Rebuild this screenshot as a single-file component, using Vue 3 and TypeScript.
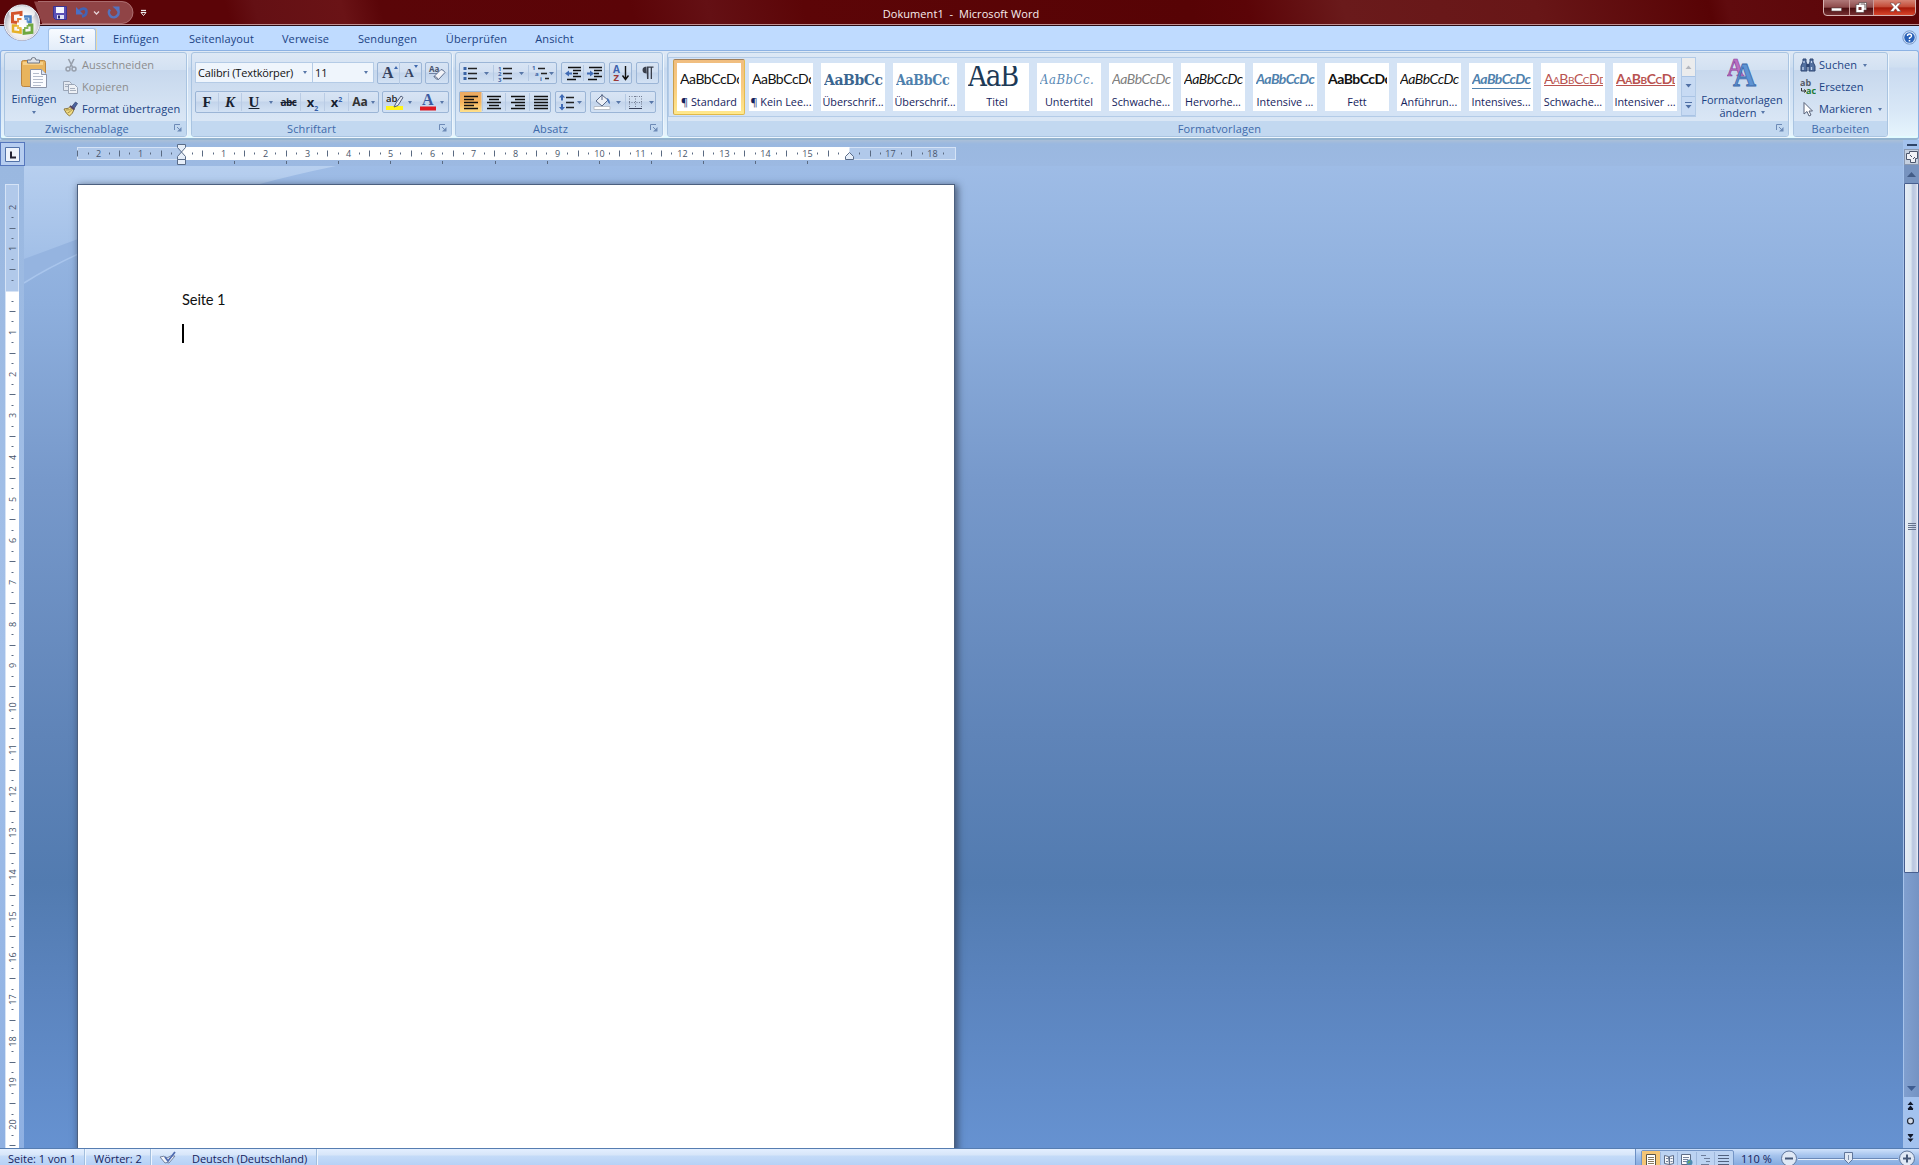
<script setup lang="ts">
interface StyleItem {
  name: string
  kind: string
  text: string
}
interface Mark {
  pos: number
  label: string
  type: 'num' | 'half' | 'dot'
}

const tabs = [
  { label: 'Start', width: 48, active: true },
  { label: 'Einfügen', width: 80 },
  { label: 'Seitenlayout', width: 91 },
  { label: 'Verweise', width: 77 },
  { label: 'Sendungen', width: 87 },
  { label: 'Überprüfen', width: 91 },
  { label: 'Ansicht', width: 65 },
]

const styles: StyleItem[] = [
  { name: '¶ Standard', kind: 'normal', text: 'AaBbCcDc' },
  { name: '¶ Kein Lee...', kind: 'normal', text: 'AaBbCcDc' },
  { name: 'Überschrif...', kind: 'h1', text: 'AaBbCc' },
  { name: 'Überschrif...', kind: 'h2', text: 'AaBbCc' },
  { name: 'Titel', kind: 'title', text: 'AaB' },
  { name: 'Untertitel', kind: 'subtitle', text: 'AaBbCc.' },
  { name: 'Schwache...', kind: 'weak', text: 'AaBbCcDc' },
  { name: 'Hervorhe...', kind: 'italic', text: 'AaBbCcDc' },
  { name: 'Intensive ...', kind: 'intense', text: 'AaBbCcDc' },
  { name: 'Fett', kind: 'bold', text: 'AaBbCcDc' },
  { name: 'Anführun...', kind: 'italic', text: 'AaBbCcDc' },
  { name: 'Intensives...', kind: 'intense ruled', text: 'AaBbCcDc' },
  { name: 'Schwache...', kind: 'ref', text: 'AaBbCcDd' },
  { name: 'Intensiver ...', kind: 'ref strong', text: 'AaBbCcDd' },
]

const CM = 41.7

function marks(from: number, to: number, origin: number, skip: number[]): Mark[] {
  const out: Mark[] = []
  for (let q = from * 4; q <= to * 4; q++) {
    const cm = q / 4
    if (skip.includes(cm)) continue
    const whole = q % 4 === 0
    out.push({
      pos: Math.floor(origin + cm * CM) + 0.5,
      label: whole ? String(Math.abs(cm)) : '',
      type: whole ? 'num' : q % 2 === 0 ? 'half' : 'dot',
    })
  }
  return out
}

const hMarks = marks(-2.5, 18.25, 105, [0, 16])
const vMarks = marks(-2, 20.5, 106.6, [0])
const tabStops = Array.from({ length: 12 }, (_, i) => Math.round(104.8 + 52.13 * (i + 1)) + 0.5)
</script>

<template>
  <div class="window">
    <header class="titlebar">
      <div class="quick">
        <svg width="150" height="24" viewBox="0 0 150 24">
          <path d="M34 1.5H122a11 11 0 0 1 0 22H42Z" fill="#a1595c" opacity=".75" />
          <path d="M38 1.5H122a11 11 0 0 1 0 22H42" fill="none" stroke="#c08a8b" opacity=".7" />
          <path d="M53.500 6.500h13v13h-11l-2-2Z" fill="#5b50b5" stroke="#3a3491" />
          <path d="M56 7h8v6h-8Z" fill="#f4f6ff" /><path d="M57 15h7v4h-7Z" fill="#dfe3f5" /><path d="M58 15.500h2v3h-2Z" fill="#2a2568" />
          <path d="M79 11C82 7.500 86.500 8 86.500 11.500C86.500 14.500 84.500 16 82 16.500" fill="none" stroke="#4263b4" stroke-width="2.600" />
          <path d="M76 7v7.500h7.500Z" fill="#4b6fc4" />
          <path d="M94 11.500l2.500 2.500 2.500-2.500" fill="none" stroke="#e6d3d7" stroke-width="1.300" />
          <path d="M110 9.500A4.800 4.800 0 1 0 117 9" fill="none" stroke="#5573bd" stroke-width="2.600" />
          <path d="M112.500 6.500h7v6.500Z" fill="#5573bd" />
          <path d="M141 10.500h5" stroke="#eee" stroke-width="1.300" /><path d="M141 12.500h5l-2.500 3Z" fill="none" stroke="#eee" />
        </svg>
      </div>
      <div class="caption">Dokument1&nbsp; -&nbsp; Microsoft Word</div>
      <div class="controls">
        <svg width="97" height="18" viewBox="0 0 97 18">
          <defs>
            <linearGradient id="wc" x2="0" y2="1"><stop offset="0" stop-color="#b47e7e" /><stop offset=".5" stop-color="#8e4b4b" /><stop offset=".55" stop-color="#4b0d0f" /><stop offset="1" stop-color="#783234" /></linearGradient>
            <linearGradient id="wx" x2="0" y2="1"><stop offset="0" stop-color="#d88b7c" /><stop offset=".5" stop-color="#c34a36" /><stop offset=".55" stop-color="#a51808" /><stop offset="1" stop-color="#d8452c" /></linearGradient>
          </defs>
          <path d="M1.500-1V12q0 3.500 3.500 3.500H90q3.500 0 3.500-3.500V-1Z" fill="url(#wc)" stroke="#d7b3b1" />
          <path d="M52-1H93V12q0 3-3 3H52Z" fill="url(#wx)" />
          <path d="M27.500 0V15M51.500 0V15" stroke="#c99b99" />
          <path d="M9.500 8h10v3h-10Z" fill="#fff" stroke="#655" stroke-width=".6" />
          <path d="M37 2.500h7.500v7.500h-2.500v2.500h-8v-8h3Z" fill="#fff" stroke="#544" stroke-width=".7" /><path d="M36.500 7h3v3h-3Z" fill="#733" />
          <path d="M38.500 4h4.500v4.500" fill="none" stroke="#655" />
          <path d="M68 3h3.500l2 2.500 2-2.500H79L75.500 7 79 11.500h-3.500l-2-2.700-2 2.700H68L71.500 7Z" fill="#fff" stroke="#644" stroke-width=".6" />
        </svg>
      </div>
      <svg class="orb" width="42" height="42" viewBox="0 0 42 42">
        <defs><radialGradient id="orb" cx=".5" cy=".6" r=".55"><stop offset="0" stop-color="#fff" /><stop offset=".65" stop-color="#eeecee" /><stop offset="1" stop-color="#a9acb9" /></radialGradient></defs>
        <circle cx="21" cy="21.500" r="18.500" fill="#59303b" opacity=".45" />
        <circle cx="21" cy="21.500" r="17.500" fill="url(#orb)" stroke="#eff2f8" />
        <ellipse cx="21" cy="12" rx="13" ry="7" fill="#fff" opacity=".7" />
        <g fill="none">
          <path d="M20 15v-3.500l-8.500 1v8.500l4.500.5" stroke="#d3542b" stroke-width="3" />
          <path d="M23 15.500h6.500v5.500h-3" stroke="#4a80c2" stroke-width="2.500" />
          <path d="M16 24.500h-4v6l7.500 1v-4" stroke="#e6b128" stroke-width="2.500" />
          <path d="M27 24h4v7.500l-8 1v-4.500" stroke="#6fa840" stroke-width="2.800" />
          <path d="M20.500 18h-3.500v3.500" stroke="#e37b35" stroke-width="1.800" />
          <path d="M23.500 18h3v3.500" stroke="#5f94cf" stroke-width="1.800" />
          <path d="M17 24v3h3.500" stroke="#ecc048" stroke-width="1.800" />
          <path d="M26.500 24v3h-3.500" stroke="#83b755" stroke-width="1.800" />
        </g>
      </svg>
    </header>

    <nav class="tabs">
      <div v-for="t in tabs" :key="t.label" class="tab" :class="{ active: t.active }" :style="{ width: t.width + 'px' }">{{ t.label }}</div>
      <svg class="help" width="15" height="15" viewBox="0 0 15 15">
        <circle cx="7.500" cy="7.500" r="6.700" fill="#cfe0f7" stroke="#7a9ac9" /><circle cx="7.500" cy="7.500" r="5.200" fill="#2a62b8" />
        <path d="M5.500 6Q5.500 4 7.500 4T9.500 6Q9.500 7 7.500 8V9" fill="none" stroke="#fff" stroke-width="1.400" /><path d="M6.700 10h1.600v1.500H6.700Z" fill="#fff" />
      </svg>
    </nav>

    <section class="ribbon">
      <div class="group clipboard">
        <div class="body">
          <div class="paste">
            <svg width="28" height="32" viewBox="0 0 28 32">
              <rect x="1.500" y="3.500" width="24" height="26" rx="2" fill="#e8b45d" stroke="#bb8540" />
              <path d="M3 5h20v3H3Z" fill="#f6cf88" />
              <path d="M7.500 6V3h3.500q0-2.500 2.500-2.500T16 3h3.500v3Z" fill="#dfe3e9" stroke="#6f7785" />
              <path d="M10.500 12.500h11l5 5v13h-16Z" fill="#fbfcff" stroke="#8a93a8" /><path d="M21.500 12.500v5h5" fill="#dce4f2" stroke="#8a93a8" />
              <path d="M13 16.500h6M13 19.500h10M13 22.500h10M13 25.500h10M13 28.500h8" stroke="#b4bccc" />
            </svg>
            <span>Einfügen</span>
            <i class="arr" />
          </div>
          <div class="rows">
            <div class="row off">
              <svg width="16" height="16" viewBox="0 0 16 16"><path d="M5.500 2l4 8M11 2L7 10" stroke="#98a0ac" stroke-width="1.600" /><circle cx="5" cy="12" r="2" fill="none" stroke="#98a0ac" stroke-width="1.500" /><circle cx="11" cy="12" r="2" fill="none" stroke="#98a0ac" stroke-width="1.500" /></svg>
              Ausschneiden
            </div>
            <div class="row off">
              <svg width="16" height="16" viewBox="0 0 16 16"><path d="M.5 2.500h6l2 2v7h-8Z" fill="#e4e9f1" stroke="#9aa5b6" /><path d="M2 5.500h4M2 7.500h3" stroke="#a7b0be" /><path d="M5.500 5.500h6l3 3v6h-9Z" fill="#eef1f6" stroke="#9aa5b6" /><path d="M7 9.500h5M7 11.500h6" stroke="#a7b0be" /></svg>
              Kopieren
            </div>
            <div class="row">
              <svg width="16" height="16" viewBox="0 0 16 16"><path d="M12.500 1l2 1.500-4 6-2.500-2Z" fill="#4a63a0" stroke="#303d66" stroke-width=".7" /><path d="M1 8q5 0 7-3l3 3.500q-1 4-4.500 6.500Q3 13 1 8Z" fill="#f1dc83" stroke="#8b7840" /><path d="M3 9q4 .5 6-2M4.500 12q3-1 5-4" stroke="#a8904a" fill="none" /><path d="M7 5l4.500 3.500" stroke="#546" stroke-width="1.800" /></svg>
              Format übertragen
            </div>
          </div>
        </div>
        <footer><span>Zwischenablage</span><svg class="launch" viewBox="0 0 8 8"><path d="M.5 6V.500H6" /><path d="M3 3l3 3" /><path d="M7.500 3v4.500H3Z" class="fill" /></svg></footer>
      </div>

      <div class="group font">
        <div class="body cols">
          <div class="line first">
            <div class="combo name"><span>Calibri (Textkörper)</span><i class="arr" /></div>
            <div class="combo size"><span>11</span><i class="arr" /></div>
            <div class="btns sizebtns">
              <b class="grow">A<i class="up" /></b><b class="grow small">A<i class="down" /></b>
            </div>
            <div class="btns clear">
              <svg width="20" height="18" viewBox="0 0 20 18"><text x="1" y="8" font-family="Open Sans, sans-serif" font-size="8" font-weight="700" fill="#48536b">Aa</text><path d="M1 9.500h9" stroke="#7183a5" /><path d="M6 12.500l7-7 q2.500 0 4 3l-6.500 7q-3 0-4.500-3Z" fill="#f3f4f9" stroke="#60708f" /><path d="M6 12.500q3 0 4.500 3" stroke="#60708f" fill="none" /></svg>
            </div>
          </div>
          <div class="line">
            <div class="btns fmt">
              <b class="g">F</b><b class="g it">K</b><b class="g un">U</b><i class="arr" /><b class="g st">abc</b><b class="g x">x<sub>2</sub></b><b class="g x">x<sup>2</sup></b><b class="g aa">Aa</b><i class="arr last" />
            </div>
            <div class="btns hl">
              <svg width="20" height="18" viewBox="0 0 20 18"><path d="M1 13h17v4H1Z" fill="#fff419" /><text x="1" y="9" font-family="Open Sans, sans-serif" font-size="9.500" font-weight="600" fill="#222">ab</text><path d="M16 3l2 1.500-5 8-4 1.500 2-4Z" fill="#e6eaf3" stroke="#535f7b" /></svg>
              <i class="arr" />
              <svg class="fc" width="18" height="18" viewBox="0 0 18 18"><text x="3" y="12" font-family="Liberation Serif, serif" font-size="16" font-weight="700" fill="#3c5ba0">A</text><path d="M1 13.500h16v4H1Z" fill="#e01a22" /></svg>
              <i class="arr" />
            </div>
          </div>
        </div>
        <footer><span>Schriftart</span><svg class="launch" viewBox="0 0 8 8"><path d="M.5 6V.500H6" /><path d="M3 3l3 3" /><path d="M7.500 3v4.500H3Z" class="fill" /></svg></footer>
      </div>

      <div class="group para">
        <div class="body cols">
          <div class="line first">
            <div class="btns w98">
              <svg width="96" height="20" viewBox="0 0 96 20">
                <g stroke="#222" stroke-width="1.300"><path d="M8 5.500h9M8 10.500h9M8 15.500h9M43 5.500h9M43 10.500h9M43 15.500h9M78 5.500h7M81 10.500h6M85 15.500h4" /></g>
                <g fill="#3b64a5"><rect x="3.500" y="4" width="3" height="3" /><rect x="3.500" y="9" width="3" height="3" /><rect x="3.500" y="14" width="3" height="3" /></g>
                <g fill="#3b64a5" font-family="Open Sans, sans-serif" font-size="6" font-weight="700"><text x="38" y="7.500">1</text><text x="38" y="13">2</text><text x="38" y="18.500">3</text><text x="72" y="7">1</text><text x="75" y="13">a</text><text x="80" y="18">i</text></g>
                <g class="tri"><path d="M24 9h5l-2.500 3ZM59 9h5l-2.500 3ZM89 9h5l-2.500 3Z" /></g>
                <path d="M33.500 2v16M68.500 2v16" stroke="#b5c9e3" />
              </svg>
            </div>
            <div class="btns w44">
              <svg width="42" height="20" viewBox="0 0 42 20"><path d="M6 4.500h13M11 7.500h8M11 10.500h5M11 13.500h8M5 16.500h9M27 4.500h13M32 7.500h8M32 10.500h5M32 13.500h8M26 16.500h9" stroke="#111" stroke-width="1.600" /><path d="M3 10.500l4-3v2h3v2h-3v2ZM32 10.500l-4-3v2h-3v2h3v2Z" fill="#3f6ab4" /><path d="M21.500 2v16" stroke="#b5c9e3" /></svg>
            </div>
            <div class="btns w23">
              <svg width="21" height="20" viewBox="0 0 21 20"><text x="3" y="9.500" font-family="Open Sans, sans-serif" font-size="10" font-weight="700" fill="#3d63ae">A</text><text x="3.500" y="18" font-family="Open Sans, sans-serif" font-size="9.500" font-weight="700" fill="#9b3836">Z</text><path d="M15.500 3v13M12.500 12.500l3 4 3-4" fill="none" stroke="#111" stroke-width="1.400" /></svg>
            </div>
            <div class="btns w23">
              <svg width="21" height="20" viewBox="0 0 21 20"><path d="M10 3.500q-4.500 0-4.500 3.500t4.500 3.500ZM9.500 3.500h7v1.300H15V16h-1.300V4.800H11.500V16H10Z" fill="#3a3f4b" /></svg>
            </div>
          </div>
          <div class="line">
            <div class="btns w92">
              <svg width="90" height="20" viewBox="0 0 90 20">
                <defs><linearGradient id="on" x2="0" y2="1"><stop offset="0" stop-color="#e9a863" /><stop offset=".5" stop-color="#f7b45c" /><stop offset="1" stop-color="#ffe08a" /></linearGradient></defs>
                <rect width="21.500" height="20" fill="url(#on)" />
                <g stroke="#111" stroke-width="1.500"><path d="M4 4.500h14M4 7.500h10M4 10.500h14M4 13.500h10M4 16.500h14M27 4.500h14M29 7.500h10M27 10.500h14M29 13.500h10M27 16.500h14M51 4.500h14M55 7.500h10M51 10.500h14M55 13.500h10M51 16.500h14M74 4.500h14M74 7.500h14M74 10.500h14M74 13.500h14M74 16.500h14" /></g>
                <path d="M22.500 1v18M45.500 1v18M69.500 1v18" stroke="#b5c9e3" />
              </svg>
            </div>
            <div class="btns w31">
              <svg width="29" height="20" viewBox="0 0 29 20"><path d="M10 5.500h8M10 10.500h8M10 15.500h8" stroke="#222" stroke-width="1.500" /><path d="M6 2l3 3.500h-2v3h-2v-3h-2ZM6 18.500l3-3.500h-2v-3h-2v3h-2Z" fill="#3f6ab4" /><path class="tri" d="M21 9h5l-2.500 3Z" /></svg>
            </div>
            <div class="btns w66">
              <svg width="64" height="20" viewBox="0 0 64 20"><path d="M3 14.500h16v3H3Z" fill="#fff" stroke="#b9bfc9" /><path d="M5 9l6-6 6 5-6 6Z" fill="#eef1f7" stroke="#5a6988" /><path d="M11 2v6" stroke="#5a6988" fill="none" /><path d="M16 6q3 1 3 6-2-1-3-4Z" fill="#4a74b8" /><path class="tri" d="M25 9h5l-2.500 3ZM58 9h5l-2.500 3Z" /><g stroke="#737d93" stroke-dasharray="1 1.500"><path d="M38.500 4v12M44.500 4v12M50.500 4v12M38 4.500h13M38 10.500h13" /></g><path d="M38 16.500h13" stroke="#39435d" stroke-width="1.200" /><path d="M34.500 2v16" stroke="#b5c9e3" /></svg>
            </div>
          </div>
        </div>
        <footer><span>Absatz</span><svg class="launch" viewBox="0 0 8 8"><path d="M.5 6V.500H6" /><path d="M3 3l3 3" /><path d="M7.500 3v4.500H3Z" class="fill" /></svg></footer>
      </div>

      <div class="group stylesg">
        <div class="body">
          <div class="gallery">
            <div v-for="(s, i) in styles" :key="i" class="item" :class="{ sel: i === 0 }">
              <div class="card">
                <div class="sample" :class="s.kind">{{ s.text }}</div>
                <div class="sname">{{ s.name }}</div>
              </div>
            </div>
            <div class="gscroll">
              <div class="dis"><svg width="7" height="4" viewBox="0 0 7 4"><path d="M.5 4h6l-3-3.500Z" fill="#b3b6bd" /></svg></div>
              <div><svg width="7" height="4" viewBox="0 0 7 4"><path d="M.5 0h6l-3 3.500Z" fill="#5070a5" /></svg></div>
              <div><svg width="7" height="7" viewBox="0 0 7 7"><path d="M0 .5h7" stroke="#5070a5" /><path d="M.5 3h6l-3 3.500Z" fill="#5070a5" /></svg></div>
            </div>
          </div>
          <div class="change">
            <svg width="30" height="29" viewBox="0 0 30 29">
              <text x="0" y="18" font-family="Liberation Serif, serif" font-size="25" font-weight="700" fill="#bb6fc2" stroke="#8c449b" stroke-width=".7" textLength="17" lengthAdjust="spacingAndGlyphs">A</text>
              <text x="6" y="27.500" font-family="Liberation Serif, serif" font-size="34" font-weight="700" fill="#5d93d3" stroke="#3b68aa" stroke-width=".8" textLength="23" lengthAdjust="spacingAndGlyphs">A</text>
            </svg>
            <span>Formatvorlagen</span>
            <span>ändern <i class="arr" /></span>
          </div>
        </div>
        <footer><span>Formatvorlagen</span><svg class="launch" viewBox="0 0 8 8"><path d="M.5 6V.500H6" /><path d="M3 3l3 3" /><path d="M7.500 3v4.500H3Z" class="fill" /></svg></footer>
      </div>

      <div class="group edit">
        <div class="body">
          <div class="rows">
            <div class="row">
              <svg width="16" height="16" viewBox="0 0 16 16"><path d="M3 2h3v3l1 2v7H1V9l2-4ZM10 2h3v3l2 4v5H9V7l1-2Z" fill="#52709f" stroke="#2f4672" /><path d="M6.500 7h3v3h-3Z" fill="#2f4672" /><path d="M3 10v3M11.500 10v3M4 4v2M11.500 4v2" stroke="#c5d6ee" stroke-width="1.300" /></svg>
              Suchen<i class="arr" />
            </div>
            <div class="row">
              <svg width="16" height="16" viewBox="0 0 16 16"><g font-family="Open Sans, sans-serif" font-weight="700" font-size="9"><text x="0" y="7" fill="#555c69">ab</text><text x="6" y="15" fill="#207a34">ac</text></g><path d="M1.500 9v3h4M4 10.500l2 1.500-2 1.500" fill="none" stroke="#333" /></svg>
              Ersetzen
            </div>
            <div class="row">
              <svg width="16" height="16" viewBox="0 0 16 16"><path d="M4 1.500v11.500l3-2.500 2 4.500 2-1-2-4h3.500Z" fill="#fff" stroke="#566178" /></svg>
              Markieren<i class="arr" />
            </div>
          </div>
        </div>
        <footer><span>Bearbeiten</span></footer>
      </div>
    </section>

    <div class="main">
      <div class="center">
        <div class="hruler">
          <div class="tabsel"><svg width="15" height="15" viewBox="0 0 15 15"><path d="M.5.500h14v14H.500Z" fill="#eef3fb" stroke="#5272a8" /><path d="M6 4.500v6h5" fill="none" stroke="#223" stroke-width="2" /></svg></div>
          <svg class="hr" width="882" height="26" viewBox="0 0 882 26">
            <rect x=".5" y="7.500" width="878" height="12" fill="#b1c9ea" stroke="#d5e3f6" />
            <rect x="104.500" y="7" width="668" height="13" fill="#fff" />
            <g v-for="m in hMarks" :key="m.pos">
              <text v-if="m.type === 'num'" :x="m.pos" y="17" text-anchor="middle" class="rl">{{ m.label }}</text>
              <path v-else-if="m.type === 'half'" :d="`M${m.pos} 10.500v6`" class="tick" />
              <path v-else :d="`M${m.pos} 12.500v2`" class="tick" />
            </g>
            <path v-for="x in tabStops" :key="x" :d="`M${x} 21v3`" class="tick" />
            <g fill="#e6eef9" stroke="#5a6c88"><path d="M100.500 4.500h8v3l-4 4.500-4-4.500Z" /><path d="M100.500 19.500v-3l4-4.500 4 4.500v3Z" /><path d="M100.500 19.500h8v5h-8Z" /><path d="M768.500 19.500v-3l4-4 4 4v3Z" /></g>
          </svg>
        </div>
        <div class="work">
          <div class="vruler">
            <svg width="15" height="964" viewBox="0 0 15 964">
              <rect x=".5" y=".5" width="13" height="980" fill="#b1c9ea" stroke="#d5e3f6" />
              <rect x="1" y="107.500" width="13" height="860" fill="#fff" />
              <g v-for="m in vMarks" :key="m.pos">
                <text v-if="m.type === 'num'" :transform="`translate(11 ${m.pos}) rotate(-90)`" text-anchor="middle" class="rl">{{ m.label }}</text>
                <path v-else-if="m.type === 'half'" :d="`M4.500 ${m.pos}h6`" class="tick" />
                <path v-else :d="`M6.500 ${m.pos}h2`" class="tick" />
              </g>
            </svg>
          </div>
          <div class="canvas">
            <svg class="wave" width="340" height="130" viewBox="0 0 340 130">
              <defs>
                <linearGradient id="w1" x2="0" y2="1"><stop offset="0" stop-color="#b7cfef" /><stop offset="1" stop-color="#9cbbe5" /></linearGradient>
              </defs>
              <path d="M0 0H312Q110 42 0 117Z" fill="url(#w1)" />
              <path d="M0 93Q30 82 70 67V79Q30 96 0 117Z" fill="#95b4e0" />
              <path d="M0 117Q30 98 70 81" stroke="#a9c5ec" fill="none" stroke-width="1.500" />
            </svg>
            <div class="page">
              <p>Seite 1</p>
              <div class="caret" />
            </div>
          </div>
        </div>
      </div>
      <aside class="vscroll">
        <div class="split" />
        <div class="toggle"><svg width="14" height="15" viewBox="0 0 14 15"><path d="M1.500 3.500h3v-2h8v7h-2v4h-5v-3h-4Z" fill="#f0f2f7" stroke="#4c566d" /><path d="M5 5l2 2M8 9l2-2" stroke="#4c566d" /></svg></div>
        <div class="upb"><svg width="9" height="5" viewBox="0 0 9 5"><path d="M0 5h9L4.500 0Z" fill="#435c87" /></svg></div>
        <div class="track">
          <div class="thumb"><i /><i /><i /><i /></div>
          <svg width="9" height="5" viewBox="0 0 9 5"><path d="M0 0h9L4.500 5Z" fill="#3e5d91" /></svg>
        </div>
        <div class="nav"><svg width="14" height="51" viewBox="0 0 14 51"><path d="M3.500 8h6L6.500 4.500ZM3.500 12h6l-3-3.500ZM3.500 37.500h6L6.500 41ZM3.500 41.500h6L6.500 45Z" fill="#10182a" /><path d="M4 12.500h5M4 37.500h5" stroke="#10182a" /><circle cx="6.500" cy="24" r="3" fill="#d3dae5" stroke="#222c3e" stroke-width="1.200" /></svg></div>
      </aside>
    </div>

    <footer class="status">
      <div class="cell c1">Seite: 1 von 1</div>
      <div class="cell c2">Wörter: 2</div>
      <div class="cell c3">
        <svg width="18" height="14" viewBox="0 0 18 14"><path d="M1 6q4-2 7 1 3-3 8-2l-6 7q-2-1-4 0Z" fill="#f4f6fb" stroke="#74829f" /><path d="M6 6l3 4L16 1" fill="none" stroke="#4f6bb0" stroke-width="1.800" /></svg>
        <span>Deutsch (Deutschland)</span>
      </div>
      <div class="fill" />
      <div class="right">
        <div class="views">
          <svg width="92" height="20" viewBox="0 0 92 20">
            <rect width="18" height="20" fill="#f5c676" />
            <path d="M4.500 3.500h9v11h-9Z" fill="#fff" stroke="#5c5647" /><path d="M6 6.500h6M6 8.500h6M6 10.500h6M6 12.500h6" stroke="#887b60" />
            <path d="M22.500 4.500l4 1 1 8-5-1ZM31.500 4.500l-4 1v8l4-1Z" fill="#f4f6fa" stroke="#5e6d87" /><path d="M24 7.500h2M24 10.500h2M28.500 7.500h2M28.500 10.500h2" stroke="#76839b" />
            <path d="M39.500 3.500h9v10h-9Z" fill="#f8fafd" stroke="#5e6d87" /><path d="M41 6.500h6M41 8.500h5M41 10.500h4" stroke="#76839b" /><circle cx="47.500" cy="11.500" r="3" fill="#4f8bb3" /><path d="M46 12l2-2" stroke="#6dae53" stroke-width="1.500" />
            <path d="M59 4.500h5M62 7.500h6M64 10.500h4M59 13.500h8" stroke="#6c7d9b" /><path d="M76 4.500h11M76 7.500h11M76 10.500h11M76 13.500h11" stroke="#51617e" />
            <path d="M18.500 1v18M35.500 1v18M54.500 1v18M72.500 1v18" stroke="#9fb8dc" />
          </svg>
        </div>
        <span class="pct">110 %</span>
        <svg width="136" height="20" viewBox="0 0 136 20">
          <path d="M18 9.500h100" stroke="#6b89b8" /><path d="M18 10.500h100" stroke="#e8f1fd" />
          <g fill="#dfe8f5" stroke="#60769b"><circle cx="9" cy="9.500" r="7.500" /><circle cx="127" cy="9.500" r="7.500" /><path d="M64.500 3.500h8v7l-4 4-4-4Z" /></g>
          <path d="M5 9.500h8M123 9.500h8M127 5.500v8" stroke="#465878" stroke-width="2" /><path d="M68.500 6v5" stroke="#8090aa" />
        </svg>
      </div>
    </footer>
  </div>
</template>

<style>
body {
  overflow: hidden;
}
</style>

<style scoped>
.window {
  width: 1919px;
  height: 1165px;
  display: flex;
  flex-direction: column;
  overflow: hidden;
  font: 11px/14px 'Open Sans', 'Noto Sans', sans-serif;
  color: #1b4384;
  background: #bfdbff;
}
.window * {
  box-sizing: border-box;
}
svg {
  display: block;
  flex: none;
}
.titlebar {
  height: 26px;
  flex: none;
  position: relative;
  display: flex;
  justify-content: space-between;
  background: linear-gradient(75deg, #5b0407 12%, #641014 13.500%, #6a1316 18%, #5a0508 20%, #5b0407 33%, #641014 37%, #5c0507 42%, #570305 62%, #5b0407 65%, #6a1a1b 70%, #681617 80%, #580305 89%, #600b0e 90%, #5b0407 100%);
  border-bottom: 1px solid #2b0b12;
  box-shadow: inset 0 -1px #c08f92;
}
.quick {
  width: 500px;
}
.caption {
  color: #f9eeee;
  padding-top: 7px;
  letter-spacing: 0.06px;
  margin-left: 3px;
}
.controls {
  width: 500px;
  display: flex;
  justify-content: flex-end;
}
.orb {
  position: absolute;
  left: 1px;
  top: 1px;
  z-index: 3;
}
.tabs {
  height: 24px;
  flex: none;
  display: flex;
  position: relative;
  padding: 2px 2px 0 48px;
  background: #bfdbff;
}
.tab {
  text-align: center;
  padding-top: 4px;
  height: 22px;
  letter-spacing: 0.13px;
}
.tab.active {
  background: linear-gradient(#f8fbff, #e3edf9);
  border: 1px solid #a0c0e8;
  border-bottom: 0;
  border-radius: 3px 3px 0 0;
  padding-top: 3px;
  box-shadow: 1px 0 #e8d9a9;
}
.help {
  margin: 2px 0 0 auto;
}
.ribbon {
  height: 90px;
  flex: none;
  display: flex;
  gap: 4px;
  padding: 1px 0 0 4px;
  background: linear-gradient(#dfe9f5, #cfdff1 18%, #c9daf0 20%, #d9e8f7 70%, #e7f5fd);
  border: solid #8db2e3;
  border-width: 1px 1px 0;
  border-radius: 3px;
  border-bottom: 2px solid #93b3cf;
  box-shadow: inset 0 -2px #e2fbff;
}
.group {
  height: 85px;
  border: 1px solid #a9c4e1;
  border-radius: 3px;
  display: flex;
  flex: none;
  flex-direction: column;
  background: linear-gradient(#dde8f5, #d3e1f2 20%, #c7d8ed 21%, #d9e6f5 80%);
  box-shadow: 1px 1px #eef6fd;
  overflow: hidden;
}
.clipboard {
  width: 183px;
  margin-left: -1px;
}
.font {
  width: 261px;
}
.para {
  width: 208px;
  margin-left: -1px;
}
.stylesg {
  width: 1122px;
}
.edit {
  width: 95px;
}
.body {
  height: 68px;
  display: flex;
}
.cols {
  flex-direction: column;
}
.group > footer {
  height: 15px;
  background: #c2d8f0;
  color: #3e6aaa;
  display: flex;
  align-items: center;
  justify-content: center;
  position: relative;
  letter-spacing: 0.15px;
}
.clipboard > footer,
.para > footer {
  padding-right: 17px;
}
.stylesg > footer {
  padding-right: 17px;
}
.font > footer {
  padding-right: 20px;
}
.launch {
  position: absolute;
  right: 4px;
  top: 3px;
  width: 8px;
  height: 8px;
  fill: none;
  stroke: #6d8ab6;
}
.launch .fill {
  fill: #6d8ab6;
  stroke: none;
}
.arr {
  display: inline-block;
  width: 0;
  height: 0;
  border: 2.5px solid transparent;
  border-top: 3px solid #5877a8;
  border-bottom: 0;
  flex: none;
}
.tri {
  fill: #5877a8;
}
.paste {
  width: 58px;
  display: flex;
  flex-direction: column;
  align-items: center;
  padding-top: 4px;
}
.paste span {
  margin: 3px 0 5px;
}
.rows {
  display: flex;
  flex-direction: column;
  padding-top: 1px;
}
.row {
  height: 22px;
  display: flex;
  align-items: center;
  gap: 3px;
  white-space: nowrap;
  letter-spacing: 0.05px;
}
.row .arr {
  margin-left: 3px;
}
.off {
  color: #8d8d8d;
}
.edit .rows {
  padding-left: 6px;
}
.line {
  display: flex;
  height: 22px;
  margin-top: 7px;
  padding-left: 3px;
}
.line.first {
  margin-top: 9px;
}
.combo {
  height: 21px;
  border: 1px solid #b4cbe6;
  background: #eff5fc;
  color: #111;
  display: flex;
  align-items: center;
  justify-content: space-between;
  padding: 0 5px 0 2px;
  white-space: nowrap;
}
.combo.name {
  width: 118px;
  letter-spacing: -0.15px;
}
.combo.size {
  width: 61px;
  border-left: 0;
}
.btns {
  height: 22px;
  border: 1px solid #9bb5d6;
  border-radius: 2px;
  display: flex;
  align-items: center;
  background: linear-gradient(#d8e4f4, #d1dff1 45%, #c3d4eb 50%, #d3e2f4);
}
.sizebtns {
  width: 45px;
  margin-left: 3px;
}
.clear {
  width: 24px;
  margin-left: 3px;
  padding-left: 2px;
}
.grow {
  width: 22px;
  font: 700 16px/20px 'Liberation Serif', serif;
  color: #34415e;
  padding-left: 4px;
  display: flex;
}
.grow + .grow {
  border-left: 1px solid #b5c9e3;
}
.grow.small {
  font-size: 13px;
  line-height: 22px;
}
.up,
.down {
  border: 2.5px solid transparent;
  width: 0;
  height: 0;
  margin-top: 3px;
}
.up {
  border-bottom: 3px solid #3f68ae;
  border-top: 0;
}
.down {
  border-top: 3px solid #3f68ae;
  border-bottom: 0;
}
.fmt {
  width: 184px;
}
.g {
  font: 700 15px/18px 'Liberation Serif', serif;
  color: #17202f;
  width: 23px;
  text-align: center;
  border-right: 1px solid #bacce5;
}
.it {
  font-style: italic;
}
.un {
  text-decoration: underline;
  width: 24px;
  border: 0;
}
.fmt > .arr {
  margin: 0 4px 0 3px;
}
.st {
  font: 700 10px/18px 'Open Sans', sans-serif;
  text-decoration: line-through;
  letter-spacing: -0.5px;
  width: 24px;
}
.x {
  font: 700 13px/18px 'Open Sans', sans-serif;
  width: 24px;
}
.x sub,
.x sup {
  font-size: 7px;
  line-height: 0;
  color: #345ea8;
}
.aa {
  font: 700 12px/18px 'Open Sans', sans-serif;
  color: #333;
  width: 22px;
  border: 0;
}
.fmt > .arr.last {
  margin: 0;
}
.hl {
  width: 67px;
  margin-left: 3px;
  padding-left: 2px;
}
.hl .arr {
  margin-left: 3px;
}
.hl .fc {
  margin-left: 7px;
}
.w98 { width: 98px; }
.w44 { width: 44px; margin-left: 4px; }
.w23 { width: 23px; margin-left: 4px; }
.w92 { width: 92px; }
.w31 { width: 31px; margin-left: 4px; }
.w66 { width: 66px; margin-left: 4px; }
.gallery {
  width: 1028px;
  height: 60px;
  margin: 4px 0 0;
  padding-left: 4px;
  display: flex;
  flex: none;
  background: #d4e3f5;
  border: 1px solid #b3cbe7;
}
.item {
  width: 72px;
  padding: 5px 4px;
  height: 58px;
  flex: none;
}
.item.sel {
  margin-top: 1px;
  height: 56px;
  padding: 3px 3px;
  border: 1px solid;
  border-color: #9e7f5c #e4bb4f #e0b94a #c9a050;
  border-radius: 2px;
  background: linear-gradient(#f0bd80, #f9cc80 50%, #ffe98d);
}
.card {
  height: 48px;
  width: 64px;
  background: #fff;
  overflow: hidden;
}
.sample {
  font: 14px/20px Lato, sans-serif;
  color: #111;
  width: 59px;
  margin-left: 3px;
  margin-top: 3px;
  height: 28px;
  padding-top: 3px;
  overflow: hidden;
  white-space: nowrap;
  letter-spacing: -0.45px;
}
.h1,
.h2 {
  font: 700 15.5px/22px 'DejaVu Serif Condensed', 'DejaVu Serif', serif;
  color: #3b6690;
  letter-spacing: -0.4px;
}
.h2 {
  font-size: 14px;
  color: #4f81ad;
  letter-spacing: -0.3px;
}
.title {
  font: 29px/20px 'DejaVu Serif Condensed', 'DejaVu Serif', serif;
  color: #1d3a56;
  padding-top: 0;
  letter-spacing: -1.2px;
}
.subtitle {
  font: italic 13px/22px 'DejaVu Serif Condensed', 'DejaVu Serif', serif;
  color: #5a89b5;
  letter-spacing: 0.5px;
}
.weak {
  font-style: italic;
  color: #808080;
}
.italic {
  font-style: italic;
}
.intense {
  font-style: italic;
  font-weight: 700;
  color: #4f81ad;
  letter-spacing: -0.6px;
}
.sample.ruled {
  border-bottom: 1px solid #4f81ad;
  height: 23px;
  margin-bottom: 5px;
}
.bold {
  font-weight: 700;
  letter-spacing: -0.5px;
}
.ref {
  font-variant: small-caps;
  color: #b95350;
  text-decoration: underline;
}
.strong {
  font-weight: 700;
}
.sname {
  text-align: center;
  color: #15225c;
  line-height: 16px;
  white-space: nowrap;
  font-size: 10.8px;
}
.gscroll {
  width: 14px;
  flex: none;
  display: flex;
  flex-direction: column;
  border-left: 1px solid #b0c8e6;
}
.gscroll > div {
  flex: 1;
  display: flex;
  align-items: center;
  justify-content: center;
  background: #c7daf3;
  border-bottom: 1px solid #a9c3e4;
}
.gscroll .dis {
  background: #ebeced;
}
.change {
  flex: 1;
  display: flex;
  flex-direction: column;
  align-items: center;
  padding-top: 5px;
}
.change span {
  line-height: 13px;
  display: flex;
  align-items: center;
  gap: 4px;
}
.change svg + span {
  margin-top: 6px;
}
.main {
  flex: 1;
  min-height: 0;
  display: flex;
}
.center {
  width: 1903px;
  display: flex;
  flex-direction: column;
}
.hruler {
  height: 26px;
  flex: none;
  display: flex;
  background: linear-gradient(#aabfd8, #9ab8e0 4px, #9cb9e2);
}
.tabsel {
  width: 25px;
  height: 24px;
  margin-top: 2px;
  border: 1px solid #5677bd;
  background: #b6cdf0;
  display: flex;
  align-items: center;
  justify-content: center;
}
.hr {
  margin-left: 52px;
}
.rl {
  font: 9px 'Open Sans', sans-serif;
  fill: #47546a;
}
.tick {
  stroke: #5a6a82;
  fill: none;
}
.work {
  flex: 1;
  min-height: 0;
  display: flex;
}
.vruler {
  width: 24px;
  padding: 18px 0 0 5px;
  background: linear-gradient(#9ab8e0, #a3c0e9 50%, #8eb0e2);
  overflow: hidden;
}
.canvas {
  flex: 1;
  position: relative;
  padding: 18px 0 0 53px;
  overflow: hidden;
  background: linear-gradient(#9ebce6 0, #8eafdd 14%, #7799cb 32%, #5f84b8 58%, #527bb0 73%, #5b84be 84%, #6692d1 100%);
}
.wave {
  position: absolute;
  left: 0;
  top: 0;
}
.page {
  position: relative;
  width: 878px;
  height: 1000px;
  border: 1px solid #4c607f;
  background: #fff;
  box-shadow: 2px 2px 7px 1px rgba(40, 50, 70, 0.65);
  padding: 104px 0 0 104px;
  color: #111;
}
.page p {
  margin: 0;
  font: 14.7px/20px Lato, sans-serif;
  letter-spacing: -0.15px;
}
.caret {
  width: 2px;
  height: 19px;
  background: #000;
  margin-top: 15px;
}
.vscroll {
  width: 16px;
  display: flex;
  flex-direction: column;
  background: #a3c2ee;
  border-left: 1px solid #a6c3eb;
}
.split {
  height: 2px;
  width: 10px;
  margin: 4px 3px 3px;
  background: #2f4468;
  flex: none;
}
.toggle {
  height: 16px;
  background: #c5d0e0;
  border: 1px solid #8b99b1;
  flex: none;
}
.upb {
  height: 18px;
  flex: none;
  background: #7793bf;
  display: flex;
  align-items: center;
  justify-content: center;
}
.track {
  height: 914px;
  flex: none;
  display: flex;
  flex-direction: column;
  align-items: center;
  justify-content: space-between;
  padding-bottom: 6px;
  background: linear-gradient(90deg, #809fcf, #7493c3);
}
.thumb {
  width: 15px;
  height: 690px;
  border: 1px solid #485f8f;
  border-radius: 1px;
  background: linear-gradient(90deg, #e6edf5 0, #dbe6f1 45%, #b9c6df 60%, #c7d1e6 85%, #eef2f9);
  display: flex;
  flex-direction: column;
  align-items: center;
  justify-content: center;
  gap: 1px;
  padding-bottom: 3px;
}
.thumb i {
  width: 8px;
  height: 1px;
  background: #66738d;
}
.nav {
  height: 51px;
}
.status {
  height: 17px;
  flex: none;
  display: flex;
  overflow: hidden;
  border-top: 1px solid #567db1;
  background: linear-gradient(#e3efff, #d7e6f9 6px, #c4dbf8 7px, #b6d1f6);
  color: #15225c;
  line-height: 20px;
}
.cell {
  height: 16px;
  border-right: 1px solid #a2bede;
  box-shadow: 1px 0 #eef6ff;
  padding-left: 8px;
  white-space: nowrap;
}
.c1 {
  width: 85px;
}
.c2 {
  width: 66px;
  padding-left: 9px;
}
.c3 {
  width: 166px;
  display: flex;
  gap: 15px;
  letter-spacing: -0.03px;
}
.c3 svg {
  margin-top: 2px;
}
.fill {
  flex: 1;
}
.right {
  width: 284px;
  display: flex;
  padding-left: 5px;
  border-left: 1px solid #6b8fc4;
  background: linear-gradient(#cfe1fb, #a3c2ec 7px, #85abe0);
}
.views {
  width: 93px;
  height: 20px;
  margin-top: 1px;
  border: 1px solid #7495c6;
  border-radius: 2px;
  background: #bcd3f2;
}
.pct {
  width: 46px;
  padding-left: 7px;
}
</style>
